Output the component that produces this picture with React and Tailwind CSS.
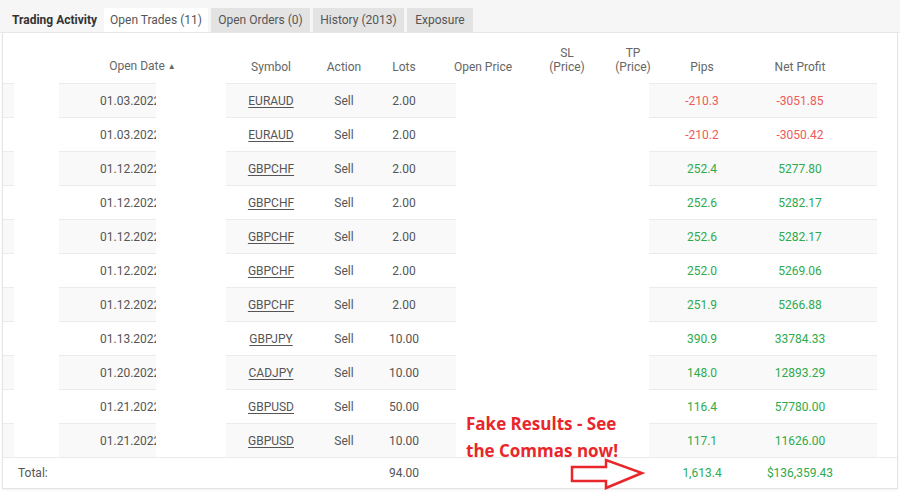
import React from "react";

const trades = [
  { date: "01.03.2022", symbol: "EURAUD", lots: "2.00", pips: "-210.3", net: "-3051.85" },
  { date: "01.03.2022", symbol: "EURAUD", lots: "2.00", pips: "-210.2", net: "-3050.42" },
  { date: "01.12.2022", symbol: "GBPCHF", lots: "2.00", pips: "252.4", net: "5277.80" },
  { date: "01.12.2022", symbol: "GBPCHF", lots: "2.00", pips: "252.6", net: "5282.17" },
  { date: "01.12.2022", symbol: "GBPCHF", lots: "2.00", pips: "252.6", net: "5282.17" },
  { date: "01.12.2022", symbol: "GBPCHF", lots: "2.00", pips: "252.0", net: "5269.06" },
  { date: "01.12.2022", symbol: "GBPCHF", lots: "2.00", pips: "251.9", net: "5266.88" },
  { date: "01.13.2022", symbol: "GBPJPY", lots: "10.00", pips: "390.9", net: "33784.33" },
  { date: "01.20.2022", symbol: "CADJPY", lots: "10.00", pips: "148.0", net: "12893.29" },
  { date: "01.21.2022", symbol: "GBPUSD", lots: "50.00", pips: "116.4", net: "57780.00" },
  { date: "01.21.2022", symbol: "GBPUSD", lots: "10.00", pips: "117.1", net: "11626.00" },
];

function TradeRow({ trade, striped }) {
  const seg = striped ? "bg-[#f9f9f9]" : "bg-white";
  const color = trade.pips.startsWith("-") ? "text-[#ee5a5a]" : "text-[#2eaa4c]";
  return (
    <div className="flex h-[34px] text-[12px] text-[#555]">
      <div className={`w-[11px] border-t border-[#ebebeb] ${seg}`}></div>
      <div className="w-[45px] bg-white"></div>
      {/* date column is partly covered in the original, so the year is cut */}
      <div className={`w-[97px] border-t border-[#ebebeb] ${seg} overflow-hidden whitespace-nowrap pl-[41px] flex items-center`}>
        {trade.date}
      </div>
      <div className="w-[70px] bg-white"></div>
      <div className={`w-[230px] border-t border-[#ebebeb] ${seg} flex items-center`}>
        <span className="w-[90px] text-center underline underline-offset-2">{trade.symbol}</span>
        <span className="w-[56px] text-center">Sell</span>
        <span className="w-[64px] text-center">{trade.lots}</span>
      </div>
      <div className="w-[193px] bg-white"></div>
      <div className={`w-[228px] border-t border-[#ebebeb] ${seg} flex items-center ${color}`}>
        <span className="w-[106px] text-center">{trade.pips}</span>
        <span className="w-[90px] text-center">{trade.net}</span>
      </div>
      <div className="flex-1 bg-white"></div>
    </div>
  );
}

export default function App() {
  return (
    <div className="relative w-[900px] h-[496px] bg-white overflow-hidden font-['Roboto',sans-serif]">
      {/* Tabs */}
      <div className="flex items-end h-[33px] bg-[#f6f6f6] border-b border-[#e8e8e8] text-[12px] text-[#555]">
        <div className="w-[104px] h-[24px] flex items-center pl-[12px] font-bold text-[#333]">Trading Activity</div>
        <div className="w-[104px] h-[24px] flex items-center justify-center bg-white">Open Trades (11)</div>
        <div className="ml-[3px] w-[99px] h-[24px] flex items-center justify-center bg-[#e3e3e3]">Open Orders (0)</div>
        <div className="ml-[3px] w-[91px] h-[24px] flex items-center justify-center bg-[#e3e3e3]">History (2013)</div>
        <div className="ml-[3px] w-[66px] h-[24px] flex items-center justify-center bg-[#e3e3e3]">Exposure</div>
      </div>

      {/* Table */}
      <div className="mx-[2px] border-l border-r border-b border-[#e4e4e4] shadow-[0_1px_2px_rgba(0,0,0,0.06)]">
        <div className="flex h-[50px] items-end pb-[9px] text-[12px] text-[#666] leading-[14px]">
          <div className="w-[56px]"></div>
          <div className="w-[167px] text-center">
            Open Date <span className="text-[8px] align-[1px]">▲</span>
          </div>
          <div className="w-[90px] text-center">Symbol</div>
          <div className="w-[56px] text-center">Action</div>
          <div className="w-[64px] text-center">Lots</div>
          <div className="w-[94px] text-center">Open Price</div>
          <div className="w-[74px] text-center">SL<br />(Price)</div>
          <div className="w-[58px] text-center">TP<br />(Price)</div>
          <div className="w-[80px] text-center">Pips</div>
          <div className="w-[116px] text-center">Net Profit</div>
        </div>

        {trades.map((t, i) => (
          <TradeRow key={i} trade={t} striped={i % 2 === 0} />
        ))}

        {/* Total */}
        <div className="flex h-[31px] items-center border-t border-[#ebebeb] text-[12px] text-[#555]">
          <div className="w-[369px] pl-[15px]">Total:</div>
          <div className="w-[64px] text-center">94.00</div>
          <div className="w-[213px]"></div>
          <div className="w-[106px] text-center text-[#2eaa4c]">1,613.4</div>
          <div className="w-[90px] text-center text-[#2eaa4c]">$136,359.43</div>
        </div>
      </div>

      {/* Annotation */}
      <div className="absolute left-[466px] top-[410px] text-[17px] leading-[27px] font-bold text-[#e8262b] font-['Open_Sans',sans-serif]">
        Fake Results - See
        <br />
        the Commas now!
      </div>
      <svg className="absolute left-[570px] top-[458px]" width="76" height="32" viewBox="0 0 76 32">
        <path
          d="M2 9 H36 V2 L72 15 L36 30 V23 H2 Z"
          fill="none"
          stroke="#e8262b"
          strokeWidth="2.5"
          strokeLinejoin="miter"
        />
      </svg>
    </div>
  );
}
